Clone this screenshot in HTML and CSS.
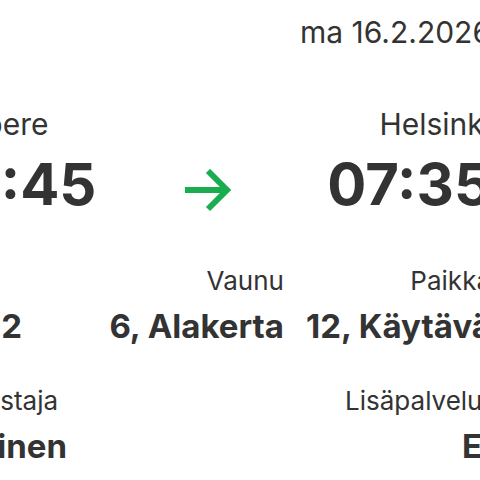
FILE: index.html
```html
<!DOCTYPE html>
<html lang="fi">
<head>
    <meta charset="UTF-8">
    <meta name="viewport" content="width=device-width, initial-scale=1.0">
    <title>Matkalippu</title>
    <link rel="stylesheet" href="styles.css">
</head>
<body>
    <div class="ticket">
        <div class="date">ma 16.2.2026</div>

        <!-- Route -->
        <div class="route">
            <div class="stop">
                <div class="station">Tampere</div>
                <div class="time">06:45</div>
            </div>
            <svg class="arrow" width="46" height="44" viewBox="0 0 46 44">
                <path d="M0 21H42M23 2L42 21L23 40" fill="none" stroke="#1aad50" stroke-width="6"/>
            </svg>
            <div class="stop stop-end">
                <div class="station">Helsinki</div>
                <div class="time">07:35</div>
            </div>
        </div>

        <!-- Seat details -->
        <div class="details">
            <div class="item">
                <div class="label">Juna</div>
                <div class="value">IC 162</div>
            </div>
            <div class="item item-right">
                <div class="label">Vaunu</div>
                <div class="value">6, Alakerta</div>
            </div>
            <div class="item item-right">
                <div class="label">Paikka</div>
                <div class="value">12, Käytävä</div>
            </div>
        </div>

        <div class="extras">
            <div class="item">
                <div class="label">Matkustaja</div>
                <div class="value">Aikuinen</div>
            </div>
            <div class="item item-right">
                <div class="label">Lisäpalvelut</div>
                <div class="value">Ei</div>
            </div>
        </div>
    </div>
</body>
</html>
```

FILE: styles.css
```css
* {
    box-sizing: border-box;
    margin: 0;
    padding: 0;
}

body {
    font-family: Inter, "Noto Sans", sans-serif;
    background-color: #fff;
    color: #333;
    overflow: hidden;
}

/* the ticket is wider than the window, both sides get cut */
.ticket {
    width: 567px;
    margin-left: -76px;
    padding-top: 14px;
}

.date {
    text-align: right;
    font-size: 30px;
    line-height: 36px;
}

.route {
    display: flex;
    justify-content: space-between;
    align-items: flex-start;
    margin-top: 56px;
}

.stop-end {
    text-align: right;
}

.station {
    font-size: 30px;
    line-height: 36px;
}

.time {
    font-size: 58px;
    line-height: 64px;
    font-weight: 700;
    margin-top: 10px;
}

.arrow {
    margin-top: 63px;
    margin-right: 8px;
}

.details {
    display: grid;
    grid-template-columns: 1fr auto auto;
    column-gap: 22px;
    margin-top: 50px;
}

.extras {
    display: flex;
    justify-content: space-between;
    margin-top: 40px;
}

.item-right {
    text-align: right;
}

.label {
    font-size: 26px;
    line-height: 30px;
}

.value {
    font-size: 33px;
    line-height: 40px;
    font-weight: 700;
    margin-top: 10px;
}
```
